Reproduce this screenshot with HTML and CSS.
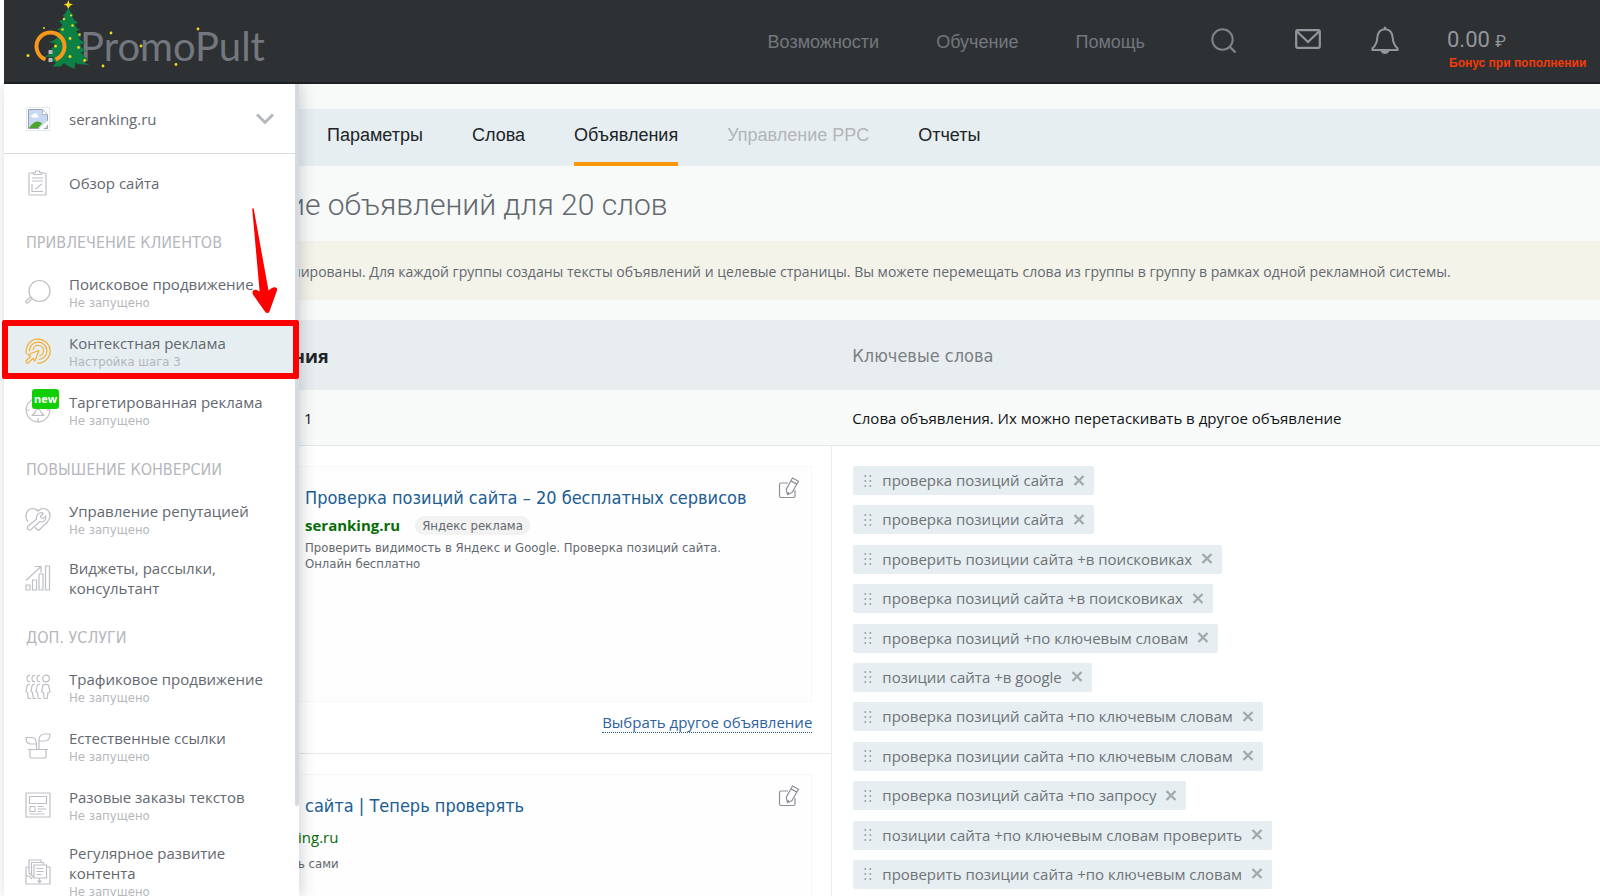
FILE: index.html
```
<!DOCTYPE html>
<html lang="ru">
<head>
<meta charset="utf-8">
<title>PromoPult</title>
<link rel="stylesheet" href="styles.css">
</head>
<body>
<svg class="defs" aria-hidden="true">
  <symbol id="i-dots" viewBox="0 0 8 14"><g fill="#9aa0a4"><circle cx="1.3" cy="2" r="1"/><circle cx="6.3" cy="2" r="1"/><circle cx="1.3" cy="7" r="1"/><circle cx="6.3" cy="7" r="1"/><circle cx="1.3" cy="12" r="1"/><circle cx="6.3" cy="12" r="1"/></g></symbol>
  <symbol id="i-x" viewBox="0 0 12 12"><path d="M1.500 1l9 9M10.500 1l-9 9" stroke="#a3a8ab" stroke-width="2.300" fill="none"/></symbol>
  <symbol id="i-edit" viewBox="0 0 22 22"><g fill="none" stroke="#8d9196" stroke-width="1.2" stroke-linejoin="round"><path d="M10 6H3q-1.500 0-1.500 1.500V19q0 1.500 1.500 1.500H15.500q1.500 0 1.500-1.500V13"/><path d="M14.500 1l6 3.200-6.500 11.300-4.500 2.200-1.300-5.300zM12.900 3.900l6 3.200M10.500 17.200l-.3-2"/></g></symbol>
</svg>
<div class="page">
  <header class="topbar">
    <a class="logo" href="#" aria-label="PromoPult">
      <svg class="logo-mark" viewBox="0 0 240 84" aria-hidden="true">
        <path d="M64.300 8Q66 14 70 16L68 17.500Q70 22 74 24L70.500 25Q72 29 76 31L72 32Q74 36 78 38L74 38.800Q77 42.500 82 43.500L76 45.500Q78 50 83 52.500L77 53Q79 57 85 60.500L78 60.500Q80 64 86 66L74 65L71.500 63.500L70.500 70L63 66.500L60 64L56.500 67.500L48.500 67.500L52 63.500L48 61L50 58.500L40 57.500Q47 55 49 51L46 49.500Q51 48 52.500 45L45 43Q51 41.500 53.500 38L49.500 35.500Q54 35 56.500 32L53 30.500Q57 29 58.500 26L55 22Q59 21 60.500 18L58.500 17Q62.500 14 64.300 8Z" fill="#0d8044"/>
        <path d="M41.500 60.500A14 14 0 1 1 51.500 60.500" fill="none" stroke="#f7981d" stroke-width="4"/>
        <path d="M44.500 51h4v4h-4zM44.500 59h4v4h-4z" fill="#b5b8bd"/>
        <path d="M64.300 1l1.200 3.400 3.500.8-3 1.600-1.700 3-1.700-3-3-1.600 3.500-.8z" fill="#f8dc1c"/>
        <g fill="#f2d91e"><circle cx="24" cy="56.500" r="1.500"/><circle cx="40" cy="29" r="1"/><circle cx="60" cy="20" r="1.200"/><circle cx="67" cy="16.500" r="1.100"/><circle cx="68.500" cy="26.500" r="1.300"/><circle cx="58.500" cy="30.500" r="1.300"/><circle cx="75.500" cy="35.500" r="1.300"/><circle cx="66" cy="39.500" r="1.400"/><circle cx="51.500" cy="47" r="1.500"/><circle cx="74.500" cy="48.500" r="1.400"/><circle cx="66" cy="57.500" r="1.500"/><circle cx="80.500" cy="61.500" r="1.400"/><circle cx="99" cy="67" r="1.400"/><circle cx="107" cy="34" r="1.400"/><circle cx="137" cy="47" r="1.400"/><circle cx="172" cy="65.500" r="1.400"/><circle cx="194" cy="30" r="1.400"/></g>
      </svg>
      <span class="logo-text">PromoPult</span>
    </a>
    <nav class="topnav">
      <a href="#">Возможности</a>
      <a href="#">Обучение</a>
      <a href="#">Помощь</a>
    </nav>
    <button class="icon-btn search" aria-label="Поиск"><svg width="26" height="26" viewBox="0 0 26 26"><circle cx="11.500" cy="11.500" r="10.200" fill="none" stroke="#7f8489" stroke-width="2"/><path d="M18.500 18.500l6 6" stroke="#7f8489" stroke-width="2.400"/></svg></button>
    <button class="icon-btn mail" aria-label="Сообщения"><svg width="26" height="20" viewBox="0 0 26 20"><rect x="1.200" y="1.200" width="23.600" height="17.600" rx="1.500" fill="none" stroke="#93979d" stroke-width="2.200"/><path d="M2 2.500l11 10.500L24 2.500" fill="none" stroke="#93979d" stroke-width="2.200"/></svg></button>
    <button class="icon-btn bell" aria-label="Уведомления"><svg width="28" height="28" viewBox="0 0 28 28"><path d="M14 3.300C8.500 3.300 6.500 8 6.200 12.500 6 17.500 4 20 1.500 22.300V24H26.500V22.300C24 20 22 17.500 21.800 12.500 21.500 8 19.500 3.300 14 3.300z" fill="none" stroke="#93979d" stroke-width="2"/><path d="M12.700 3.500V1.500Q14-.4 15.300 1.500V3.500zM9.500 25h9q-1.500 3-4.500 3t-4.500-3z" fill="#93979d"/></svg></button>
    <div class="balance">
      <a class="sum" href="#">0.00 <span class="rub">₽</span></a>
      <a class="bonus" href="#">Бонус при пополнении</a>
    </div>
  </header>

  <div class="body">
    <aside class="drawer">
      <button class="site">
        <svg class="thumb" width="24" height="24" viewBox="0 0 24 24" aria-hidden="true"><rect x=".5" y=".5" width="23" height="23" fill="#fff" stroke="#dfebec"/><path d="M2.500 2.500h14l5 5v14h-19z" fill="#c6d8f3" stroke="#9b9fa6"/><path d="M16.500 2.500v5h5z" fill="#fff" stroke="#b5b8bd"/><path d="M5 9.500a2 2 0 0 1 2-2 2.500 2.500 0 0 1 4.500.5 1.500 1.500 0 0 1 .5 2.500H6z" fill="#fff"/><path d="M3 21q5-7.500 9-6.500 3 .7 4 2L12 21z" fill="#4ea32c"/><path d="M12 22.500L22.500 13v4L17 22.500z" fill="#fff"/></svg>
        <span class="site-name">seranking.ru</span>
        <svg width="18" height="12" viewBox="0 0 18 12" aria-hidden="true"><path d="M1 1.500l8 8 8-8" fill="none" stroke="#b5b8be" stroke-width="3"/></svg>
      </button>
      <nav class="menu">
        <a class="item overview" href="#">
          <svg viewBox="0 0 26 26"><path d="M8 3H5Q4 3 4 4V24q0 1 1 1H20q1 0 1-1V4q0-1-1-1H17M8.500 4.500v-2H10.500V1h4v1.500h2v2zM7 8H18M7 11H18M7 14v7.500H18M10 19l3-1.500 1.500-2L17 14"/></svg>
          <span class="label"><span class="name">Обзор сайта</span></span>
        </a>
        <h2>ПРИВЛЕЧЕНИЕ КЛИЕНТОВ</h2>
        <a class="item" href="#">
          <svg viewBox="0 0 26 26"><circle cx="14.500" cy="12" r="10.500"/><path d="M7 19.300L3.500 23.500q-1.200 1.200-2.200.2t.2-2.200L5.700 17.800"/></svg>
          <span class="label"><span class="name">Поисковое продвижение</span><span class="state">Не запущено</span></span>
        </a>
        <a class="item active" href="#">
          <svg viewBox="0 0 26 26"><path d="M1.500 16A12 12 0 1 1 12 25M4.500 13.500A8.700 8.700 0 1 1 14 21.500M8 12A5.300 5.300 0 1 1 14.500 17.800M14 12.500L3 16.500l2.700 1.700-4.400 4.300q-.7 1 .2 2t2.200.2l4.300-4.400 1.800 2.900z"/></svg>
          <span class="label"><span class="name">Контекстная реклама</span><span class="state">Настройка шага 3</span></span>
        </a>
        <a class="item" href="#">
          <svg viewBox="0 0 26 26"><circle cx="13" cy="13" r="11.800"/><path d="M13 1v5M1 13h4M21 13h4M13 21v4M9.500 16q1-3 3.500-4 2.500 1 3.500 4l2.500 2.500H7z"/></svg>
          <span class="badge">new</span>
          <span class="label"><span class="name">Таргетированная реклама</span><span class="state">Не запущено</span></span>
        </a>
        <h2>ПОВЫШЕНИЕ КОНВЕРСИИ</h2>
        <a class="item" href="#">
          <svg viewBox="0 0 26 26"><path d="M2.800 16C.5 12 .5 7.500 3 4.500 6 1.500 10 2 13 5c3-3 7-3.500 10-.5 3.300 4 2 8.500-1 12L13.500 24.500 10 21.500M13 8q3-2.500 5.500-.5L15.500 10l.5 2 2.500.5 2-2.500q1 4-2 5.500-1.500.7-3.500 0L6 23.500q-1.500 1-3 0t0-3.200L11.500 13Q11 10 13 8z"/></svg>
          <span class="label"><span class="name">Управление репутацией</span><span class="state">Не запущено</span></span>
        </a>
        <a class="item" href="#">
          <svg viewBox="0 0 26 26"><path d="M1 20h4v5H1zM7.500 15h4v10h-4zM14 9h4v16h-4zM20.500 1h4v24h-4zM1 15.500L15.500 2M10 1.500h6v6"/></svg>
          <span class="label"><span class="name">Виджеты, рассылки, консультант</span></span>
        </a>
        <h2>ДОП. УСЛУГИ</h2>
        <a class="item" href="#">
          <svg viewBox="0 0 26 26"><circle cx="21" cy="4.500" r="3.300"/><path d="M5 1.500q-3-.5-3 3t3 3M10 1.500q-3-.5-3 3t3 3M15 1.500q-3-.5-3 3t3 3M18 11q1.500-1.300 5.500 0l1.500 7-2 .5-.7 6h-3l-.8-6-2-.5zM5 10q-2.500 0-3 2l-1 5.500 1.500 1 .7 6H6M10 10q-2.500 0-3 2l-1 5.500 1.500 1 .7 6H11M15 10q-2.500 0-3 2l-1 5.500 1.500 1 .7 6H16"/></svg>
          <span class="label"><span class="name">Трафиковое продвижение</span><span class="state">Не запущено</span></span>
        </a>
        <a class="item" href="#">
          <svg viewBox="0 0 26 26"><path d="M5 17v7q0 1 1 1H20q1 0 1-1V17M3 16.500H23M11.500 16.500V10Q11 4.500 7 4.500H1Q1 11 6 11h5.500M14 16.500V7.500Q14 1 20 1h5q0 7-5.500 7H14"/></svg>
          <span class="label"><span class="name">Естественные ссылки</span><span class="state">Не запущено</span></span>
        </a>
        <a class="item" href="#">
          <svg viewBox="0 0 26 26"><path d="M1 1H25V25H1zM4.500 4.500h17v7h-17zM5 14.500h5v5H5zM12.500 14.500h6M12.500 17h9M12.500 19.500h4M4.500 22h15"/></svg>
          <span class="label"><span class="name">Разовые заказы текстов</span><span class="state">Не запущено</span></span>
        </a>
        <a class="item" href="#">
          <svg viewBox="0 0 26 26"><path d="M4 8H1V25H25V8H22M4 14V1H16V3M6.500 16V3.500H18.500V5.500M9 6h12.500v13H9zM4 14l2.500 2L9 19M11.500 9.500h7M11.500 12.500h7M11.500 15.500h5M14.500 19v4M12.500 21.500l2 2 2-2M1 17h3l3 3"/></svg>
          <span class="label"><span class="name">Регулярное развитие контента</span><span class="state">Не запущено</span></span>
        </a>
      </nav>
      <span class="scroll-thumb"></span>
      <span class="frame"></span>
      <svg class="arrow" viewBox="0 0 30 110" aria-hidden="true"><path d="M4 3L19 86Q22 83 25 82 28.500 82 27 85L19.500 106Q18 107 16.500 105L4.500 88Q3.500 84 7 84.500L11.500 87Z" fill="#fe0000" stroke="#fe0000" stroke-width="1.500" stroke-linejoin="round"/></svg>
    </aside>

    <main class="content">
      <nav class="tabs">
        <a href="#">Параметры</a>
        <a href="#">Слова</a>
        <a class="current" href="#">Объявления</a>
        <a class="disabled" href="#">Управление PPC</a>
        <a href="#">Отчеты</a>
      </nav>
      <h1>ие объявлений для 20 слов</h1>
      <p class="notice">пированы. Для каждой группы созданы тексты объявлений и целевые страницы. Вы можете перемещать слова из группы в группу в рамках одной рекламной системы.</p>
      <div class="cols head">
        <strong class="ads-title">ния</strong>
        <span class="words-title">Ключевые слова</span>
      </div>
      <div class="cols sub">
        <span class="ads-sub">1</span>
        <span class="words-sub">Слова объявления. Их можно перетаскивать в другое объявление</span>
      </div>
      <div class="cols data">
        <div class="ads">
          <section class="ad">
            <article class="card">
              <div class="card-text">
                <a class="ad-title" href="#">Проверка позиций сайта – 20 бесплатных сервисов</a>
                <div class="domain"><b>seranking.ru</b><span class="tag-ad">Яндекс реклама</span></div>
                <p>Проверить видимость в Яндекс и Google. Проверка позиций сайта. Онлайн бесплатно</p>
              </div>
              <button class="edit" aria-label="Редактировать"><svg width="22" height="22"><use href="#i-edit"/></svg></button>
            </article>
            <a class="other" href="#">Выбрать другое объявление</a>
          </section>
          <section class="ad">
            <article class="card google">
              <div class="card-text">
                <a class="ad-title" href="#">сайта | Теперь проверять</a>
                <div class="domain">ing.ru</div>
                <p>ь сами</p>
              </div>
              <button class="edit" aria-label="Редактировать"><svg width="22" height="22"><use href="#i-edit"/></svg></button>
            </article>
          </section>
        </div>
        <ul class="words">
          <li><svg class="drag"><use href="#i-dots"/></svg>проверка позиций сайта<button aria-label="Удалить"><svg><use href="#i-x"/></svg></button></li>
          <li><svg class="drag"><use href="#i-dots"/></svg>проверка позиции сайта<button aria-label="Удалить"><svg><use href="#i-x"/></svg></button></li>
          <li><svg class="drag"><use href="#i-dots"/></svg>проверить позиции сайта +в поисковиках<button aria-label="Удалить"><svg><use href="#i-x"/></svg></button></li>
          <li><svg class="drag"><use href="#i-dots"/></svg>проверка позиций сайта +в поисковиках<button aria-label="Удалить"><svg><use href="#i-x"/></svg></button></li>
          <li><svg class="drag"><use href="#i-dots"/></svg>проверка позиций +по ключевым словам<button aria-label="Удалить"><svg><use href="#i-x"/></svg></button></li>
          <li><svg class="drag"><use href="#i-dots"/></svg>позиции сайта +в google<button aria-label="Удалить"><svg><use href="#i-x"/></svg></button></li>
          <li><svg class="drag"><use href="#i-dots"/></svg>проверка позиций сайта +по ключевым словам<button aria-label="Удалить"><svg><use href="#i-x"/></svg></button></li>
          <li><svg class="drag"><use href="#i-dots"/></svg>проверка позиции сайта +по ключевым словам<button aria-label="Удалить"><svg><use href="#i-x"/></svg></button></li>
          <li><svg class="drag"><use href="#i-dots"/></svg>проверка позиций сайта +по запросу<button aria-label="Удалить"><svg><use href="#i-x"/></svg></button></li>
          <li><svg class="drag"><use href="#i-dots"/></svg>позиции сайта +по ключевым словам проверить<button aria-label="Удалить"><svg><use href="#i-x"/></svg></button></li>
          <li><svg class="drag"><use href="#i-dots"/></svg>проверить позиции сайта +по ключевым словам<button aria-label="Удалить"><svg><use href="#i-x"/></svg></button></li>
        </ul>
      </div>
    </main>
  </div>
</div>
</body>
</html>
```
FILE: styles.css
```
* { box-sizing: border-box; }

body {
  margin: 0;
  background: #fff;
  color: #63686f;
  font: 15px/20px "Open Sans", "Noto Sans", sans-serif;
  overflow: hidden;
}

a { color: inherit; text-decoration: none; }
button { margin: 0; padding: 0; border: 0; background: none; font: inherit; color: inherit; cursor: pointer; }
h1, h2, p, ul { margin: 0; padding: 0; }
.defs { display: none; }

.page {
  display: flex;
  flex-direction: column;
  height: 100vh;
  padding-left: 4px;
  overflow: hidden;
}

/* Top bar */
.topbar {
  flex: none;
  display: flex;
  align-items: center;
  height: 84px;
  padding-right: 10px;
  background: #2d3134;
  border-bottom: 2px solid #1c2022;
}
.logo { position: relative; display: block; height: 84px; padding-left: 76px; margin-right: auto; }
.logo-text {
  font: 400 40px/94px Lato, sans-serif;
  color: #73777e;
}
.logo-mark { position: absolute; left: 0; top: 0; width: 240px; height: 84px; z-index: 1; }
.topnav { display: flex; gap: 57px; padding-top: 2px; font: 18px/24px "Liberation Sans", Arial, sans-serif; color: #73777d; }
.icon-btn svg { display: block; }
.search { margin-left: 66px; }
.mail { margin: 0 50px 4px 58px; }
.bell { margin: 0 48px 2px 0; }
.balance { display: flex; flex-direction: column; width: 143px; padding-top: 16px; white-space: nowrap; }
.sum { font: 22px/26px Roboto, sans-serif; color: #93979d; }
.rub { font-size: 16px; }
.bonus { padding-left: 2px; font: bold 12px/16px "Liberation Sans", Arial, sans-serif; color: #f63a08; }

.body {
  flex: 1;
  min-height: 0;
  display: grid;
  grid-template-columns: 280px minmax(0, 1fr);
  grid-template-rows: minmax(0, 1fr);
}

/* Drawer that lies over the left edge of the content */
.drawer {
  position: relative;
  z-index: 2;
  width: 295px;
  background: #fff;
  box-shadow: 2px 0 14px rgba(40, 50, 60, .22);
  clip-path: inset(0 -30px 0 -10px);
}
.site {
  display: flex;
  align-items: center;
  width: 291px;
  height: 70px;
  padding: 0 21px 0 22px;
  border-bottom: 1px solid #d9dbde;
  text-align: left;
}
.site-name { flex: 1; padding-left: 19px; }
.menu { width: 291px; }
.menu h2 {
  height: 50px;
  padding: 22px 22px 0;
  font: 16px/20px "DejaVu Sans Condensed", "DejaVu Sans", sans-serif;
  color: #b5b7bd;
}
.item {
  position: relative;
  display: flex;
  align-items: center;
  min-height: 59px;
  padding: 10px 22px 7px 21px;
}
.item.overview { min-height: 57px; padding: 5px 22px 5px 21px; }
.item.active { background: #e6eef1; }
.item > svg {
  flex: none;
  width: 26px;
  height: 26px;
  margin-right: 18px;
  fill: none;
  stroke: #bdbfc5;
  stroke-width: 1.2;
  stroke-linejoin: round;
}
.item.active > svg { stroke: #f5ad33; }
.label { display: flex; flex-direction: column; }
.state {
  font: 13px/17px "DejaVu Sans Condensed", "DejaVu Sans", sans-serif;
  color: #b5b7bd;
}
.badge {
  position: absolute;
  left: 28px;
  top: 10px;
  width: 27px;
  border-radius: 3px;
  background: #10cf04;
  color: #fff;
  font: bold 11px/20px "Open Sans", sans-serif;
  text-align: center;
}
.scroll-thumb {
  position: absolute;
  right: 0;
  top: 0;
  width: 4px;
  height: 722px;
  border-radius: 0 0 2px 2px;
  background: #d6d9df;
}
.frame {
  position: absolute;
  left: -2px;
  top: 236px;
  width: 297px;
  height: 59px;
  border: 6px solid #fe0000;
  border-radius: 2px;
}
.arrow { position: absolute; left: 245px; top: 122px; width: 30px; height: 110px; }

/* Content */
.content { display: flex; flex-direction: column; padding-top: 25px; background: #f8faf9; min-height: 0; overflow: hidden; }
.tabs {
  flex: none;
  display: flex;
  gap: 49px;
  height: 57px;
  padding-left: 43px;
  background: #e6eef1;
  font: 18px/53px "Liberation Sans", Arial, sans-serif;
  color: #202427;
}
.tabs .current { border-bottom: 4px solid #f8960c; }
.tabs .disabled { color: #b3b5b7; }
h1 {
  padding: 19px 0 16px 4px;
  font: 300 30px/40px Roboto, sans-serif;
  color: #63686f;
}
.notice {
  flex: none;
  height: 59px;
  padding-left: 8px;
  background: #f4f3ea;
  font-size: 14px;
  line-height: 62px;
  white-space: nowrap;
}
.cols { display: grid; grid-template-columns: 5fr 7fr; }
.head {
  flex: none;
  height: 70px;
  margin-top: 20px;
  background: #e8edf0;
  line-height: 72px;
}
.ads-title { padding-left: 9px; font-size: 18px; color: #202427; }
.words-title { padding-left: 20px; font: 18px/72px "DejaVu Sans Condensed", "DejaVu Sans", sans-serif; color: #7b7f84; }
.sub { flex: none; height: 56px; border-bottom: 1px solid #e3eaec; color: #101214; line-height: 56px; }
.ads-sub { padding-left: 20px; }
.words-sub { padding-left: 20px; }
.data { flex: 1; min-height: 0; grid-template-rows: minmax(0, 1fr); background: #fff; }
.ads { border-right: 1px solid #e8edef; min-height: 0; overflow: hidden; }
.ad {
  display: flex;
  flex-direction: column;
  height: 308px;
  padding: 20px 19px 20px 0;
  border-bottom: 1px solid #e3eaec;
}
.card {
  display: flex;
  justify-content: space-between;
  height: 238px;
  padding: 10px 11px 0 20px;
  border: 1px solid #f6f7f8;
  background: #fefefe;
}
.card-text { padding-top: 9px; }
.ad-title { display: block; font: 18px/24px "DejaVu Sans Condensed", "DejaVu Sans", sans-serif; color: #205d93; }
.domain { display: flex; align-items: center; gap: 15px; padding: 5px 0; font-size: 15px; line-height: 20px; color: #066c06; }
.tag-ad {
  padding: 0 7px;
  border-radius: 9px;
  background: #f2f2f2;
  color: #63686f;
  font: 13px/19px "DejaVu Sans Condensed", "DejaVu Sans", sans-serif;
}
.card p { max-width: 430px; font: 13px/16px "DejaVu Sans Condensed", "DejaVu Sans", sans-serif; }
.edit { align-self: flex-start; }
.edit svg { display: block; }
.google { padding-left: 13px; }
.google .ad-title { padding-left: 7px; }
.google .domain { padding: 9px 0 9px; font-size: 15px; }
.other {
  align-self: flex-end;
  margin-top: 10px;
  border-bottom: 1px dotted #205d93;
  color: #2c62a0;
}

.words {
  display: flex;
  flex-direction: column;
  align-items: flex-start;
  justify-content: space-between;
  padding: 20px 20px 7px 21px;
  list-style: none;
}
.words li {
  display: flex;
  align-items: center;
  padding: 0 9px 0 11px;
  border-radius: 2px;
  background: #e6eef1;
  color: #6e7377;
  line-height: 29px;
  white-space: nowrap;
}
.drag { width: 8px; height: 14px; margin-right: 10px; }
.words button { margin-left: 9px; }
.words button svg { display: block; width: 12px; height: 12px; }
```
